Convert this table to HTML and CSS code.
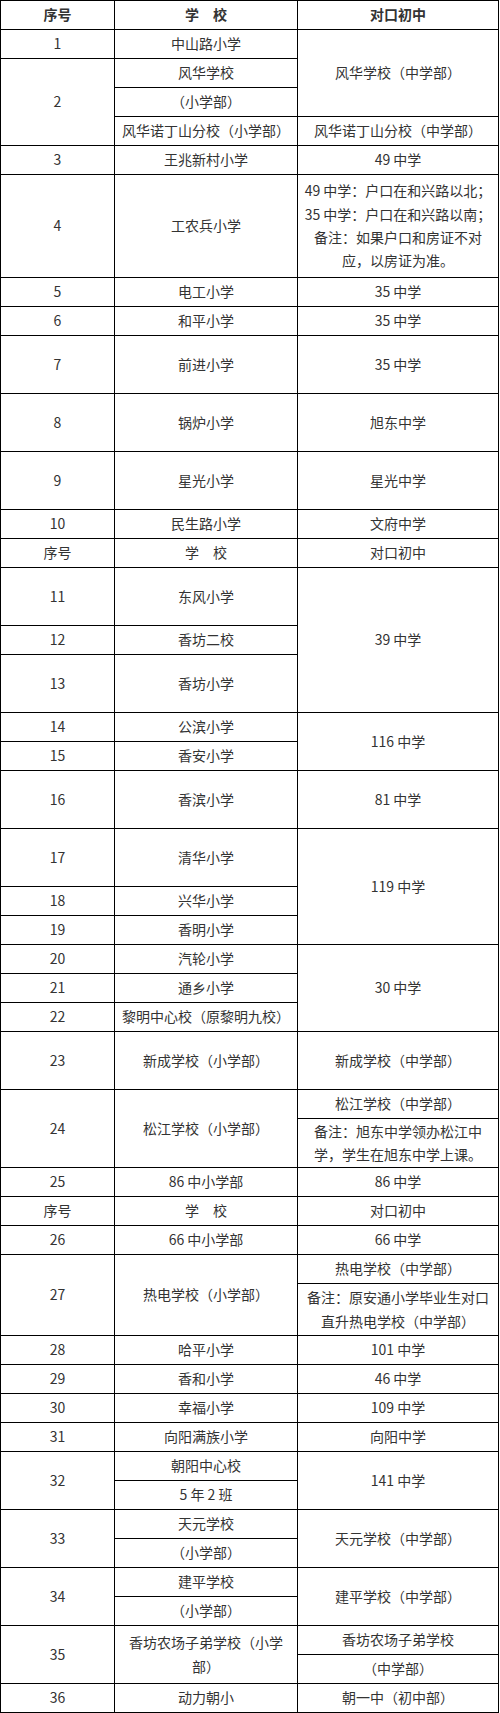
FILE: index.html
```html
<!DOCTYPE html>
<html lang="zh-CN">
<head>
<meta charset="utf-8">
<title>对口初中</title>
<link rel="stylesheet" href="styles.css">
</head>
<body>
<table class="grid">
  <colgroup>
    <col class="c-no">
    <col class="c-school">
    <col class="c-middle">
  </colgroup>
  <tbody>
    <tr class="h29 head"><td>序号</td><td>学　校</td><td>对口初中</td></tr>
    <tr class="h29"><td>1</td><td>中山路小学</td><td rowspan="3">风华学校（中学部）</td></tr>
    <tr class="h29"><td rowspan="3">2</td><td>风华学校</td></tr>
    <tr class="h29"><td>（小学部）</td></tr>
    <tr class="h29"><td>风华诺丁山分校（小学部）</td><td>风华诺丁山分校（中学部）</td></tr>
    <tr class="h29"><td>3</td><td>王兆新村小学</td><td>49 中学</td></tr>
    <tr class="h103"><td>4</td><td>工农兵小学</td><td class="note">49 中学：户口在和兴路以北；<br>35 中学：户口在和兴路以南；<br>备注：如果户口和房证不对应，以房证为准。</td></tr>
    <tr class="h29"><td>5</td><td>电工小学</td><td>35 中学</td></tr>
    <tr class="h29"><td>6</td><td>和平小学</td><td>35 中学</td></tr>
    <tr class="h58"><td>7</td><td>前进小学</td><td>35 中学</td></tr>
    <tr class="h58"><td>8</td><td>锅炉小学</td><td>旭东中学</td></tr>
    <tr class="h58"><td>9</td><td>星光小学</td><td>星光中学</td></tr>
    <tr class="h29"><td>10</td><td>民生路小学</td><td>文府中学</td></tr>
    <tr class="h29"><td>序号</td><td>学　校</td><td>对口初中</td></tr>
    <tr class="h58"><td>11</td><td>东风小学</td><td rowspan="3">39 中学</td></tr>
    <tr class="h29"><td>12</td><td>香坊二校</td></tr>
    <tr class="h58"><td>13</td><td>香坊小学</td></tr>
    <tr class="h29"><td>14</td><td>公滨小学</td><td rowspan="2">116 中学</td></tr>
    <tr class="h29"><td>15</td><td>香安小学</td></tr>
    <tr class="h58"><td>16</td><td>香滨小学</td><td>81 中学</td></tr>
    <tr class="h58"><td>17</td><td>清华小学</td><td rowspan="3">119 中学</td></tr>
    <tr class="h29"><td>18</td><td>兴华小学</td></tr>
    <tr class="h29"><td>19</td><td>香明小学</td></tr>
    <tr class="h29"><td>20</td><td>汽轮小学</td><td rowspan="3">30 中学</td></tr>
    <tr class="h29"><td>21</td><td>通乡小学</td></tr>
    <tr class="h29"><td>22</td><td>黎明中心校（原黎明九校）</td></tr>
    <tr class="h58"><td>23</td><td>新成学校（小学部）</td><td>新成学校（中学部）</td></tr>
    <tr class="h29"><td rowspan="2">24</td><td rowspan="2">松江学校（小学部）</td><td>松江学校（中学部）</td></tr>
    <tr class="h49"><td class="note">备注：旭东中学领办松江中学，学生在旭东中学上课。</td></tr>
    <tr class="h29"><td>25</td><td>86 中小学部</td><td>86 中学</td></tr>
    <tr class="h29"><td>序号</td><td>学　校</td><td>对口初中</td></tr>
    <tr class="h29"><td>26</td><td>66 中小学部</td><td>66 中学</td></tr>
    <tr class="h29"><td rowspan="2">27</td><td rowspan="2">热电学校（小学部）</td><td>热电学校（中学部）</td></tr>
    <tr class="h52"><td class="note">备注：原安通小学毕业生对口直升热电学校（中学部）</td></tr>
    <tr class="h29"><td>28</td><td>哈平小学</td><td>101 中学</td></tr>
    <tr class="h29"><td>29</td><td>香和小学</td><td>46 中学</td></tr>
    <tr class="h29"><td>30</td><td>幸福小学</td><td>109 中学</td></tr>
    <tr class="h29"><td>31</td><td>向阳满族小学</td><td>向阳中学</td></tr>
    <tr class="h29"><td rowspan="2">32</td><td>朝阳中心校</td><td rowspan="2">141 中学</td></tr>
    <tr class="h29"><td>5 年 2 班</td></tr>
    <tr class="h29"><td rowspan="2">33</td><td>天元学校</td><td rowspan="2">天元学校（中学部）</td></tr>
    <tr class="h29"><td>（小学部）</td></tr>
    <tr class="h29"><td rowspan="2">34</td><td>建平学校</td><td rowspan="2">建平学校（中学部）</td></tr>
    <tr class="h29"><td>（小学部）</td></tr>
    <tr class="h29"><td rowspan="2">35</td><td rowspan="2">香坊农场子弟学校（小学部）</td><td>香坊农场子弟学校</td></tr>
    <tr class="h29"><td>（中学部）</td></tr>
    <tr class="h29"><td>36</td><td>动力朝小</td><td>朝一中（初中部）</td></tr>
  </tbody>
</table>
</body>
</html>
```

FILE: styles.css
```css
html, body {
  margin: 0;
  padding: 0;
  background: #ffffff;
}

.grid {
  border-collapse: collapse;
  table-layout: fixed;
  width: 498px;
  font-family: "Noto Sans CJK SC", "Microsoft YaHei", sans-serif;
  font-size: 14px;
  line-height: 23.3px;
  color: #333333;
}

.c-no { width: 114px; }
.c-school { width: 183px; }
.c-middle { width: 201px; }

.grid td {
  border: 1px solid #000000;
  padding: 0 5px;
  text-align: center;
  vertical-align: middle;
  word-break: normal;
  line-break: strict;
}

.head td {
  font-weight: bold;
}

.h29 { height: 29px; }
.h49 { height: 49px; }
.h52 { height: 52px; }
.h58 { height: 58px; }
.h103 { height: 103px; }
```
